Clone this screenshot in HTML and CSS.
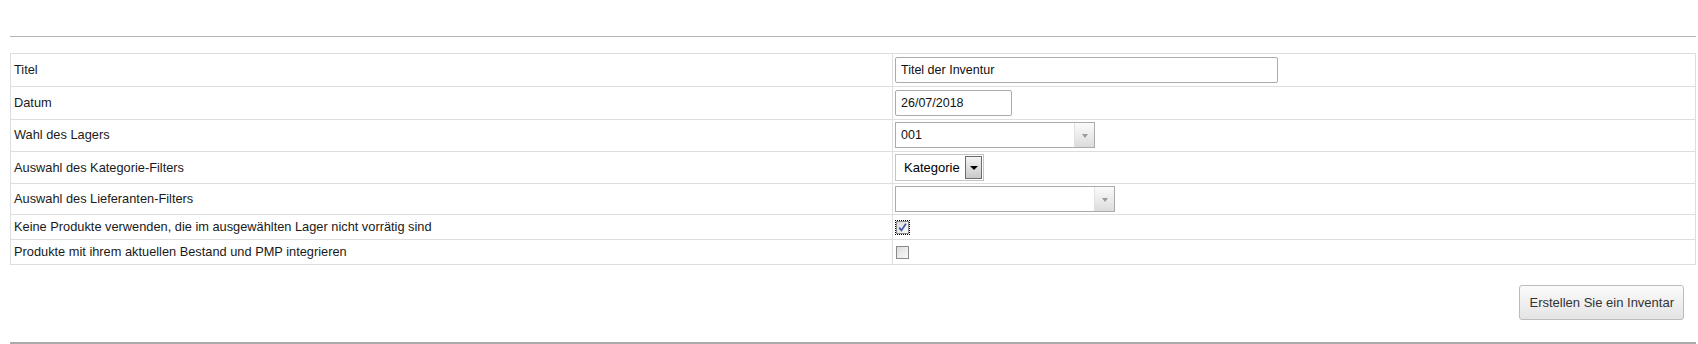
FILE: index.html
```html
<!DOCTYPE html>
<html lang="de">
<head>
<meta charset="utf-8">
<title>Inventur</title>
<link rel="stylesheet" href="styles.css">
</head>
<body>
<div class="page">
  <div class="rule rule-top"></div>
  <table class="form-table">
    <colgroup><col class="col-label"><col class="col-field"></colgroup>
    <tr class="row-tall">
      <td>Titel</td>
      <td><input class="text-input w-title" type="text" value="Titel der Inventur"></td>
    </tr>
    <tr class="row-tall">
      <td>Datum</td>
      <td><input class="text-input w-date" type="text" value="26/07/2018"></td>
    </tr>
    <tr class="row-mid">
      <td>Wahl des Lagers</td>
      <td><div class="combo w-lager"><span class="combo-text">001</span><span class="combo-arrow"><span class="tri-gray"></span></span></div></td>
    </tr>
    <tr class="row-mid2">
      <td>Auswahl des Kategorie-Filters</td>
      <td><div class="native-select"><span class="native-text">Kategorie</span><span class="native-btn"><span class="tri-black"></span></span></div></td>
    </tr>
    <tr class="row-mid3">
      <td>Auswahl des Lieferanten-Filters</td>
      <td><div class="combo w-lief"><span class="combo-text"></span><span class="combo-arrow"><span class="tri-gray"></span></span></div></td>
    </tr>
    <tr class="row-check">
      <td>Keine Produkte verwenden, die im ausgewählten Lager nicht vorrätig sind</td>
      <td><span class="focus-ring"><span class="checkbox checked"><svg width="11" height="11" viewBox="0 0 11 11"><path d="M2.2 5.6 L4.4 8.4 L8.9 1.8" fill="none" stroke="#3d56a6" stroke-width="1.7"/></svg></span></span></td>
    </tr>
    <tr class="row-check">
      <td>Produkte mit ihrem aktuellen Bestand und PMP integrieren</td>
      <td><span class="checkbox"></span></td>
    </tr>
  </table>
  <div class="actions">
    <button class="btn" type="button">Erstellen Sie ein Inventar</button>
  </div>
  <div class="rule rule-bottom"></div>
</div>
</body>
</html>
```
FILE: styles.css
```css
html, body {
  margin: 0;
  padding: 0;
  background: #fff;
}
body {
  font-family: "Liberation Sans", Arial, sans-serif;
  font-size: 12.8px;
  color: #1a1a1a;
}
.page {
  margin: 0 2px 0 10px;
  padding-top: 36px;
}
.rule {
  height: 0;
  border-top: 1px solid #b4b4b4;
}
.form-table {
  margin-top: 16px;
  width: 100%;
  border-collapse: collapse;
  table-layout: fixed;
}
.col-label { width: 882px; }
.form-table td {
  border: 1px solid #dedede;
  padding: 3px 3px;
  vertical-align: middle;
  line-height: 18px;
}
.form-table td:first-child { padding-left: 3px; }
.form-table td:last-child { padding-left: 2px; }

.row-mid td { padding-top: 2px; padding-bottom: 3px; }
.row-mid2 td { padding-top: 2px; padding-bottom: 2px; }
.row-mid3 td { padding-top: 2px; padding-bottom: 2px; }

.text-input {
  display: block;
  box-sizing: border-box;
  height: 26px;
  margin: 0;
  border: 1px solid #ababab;
  border-radius: 2px;
  padding: 0 5px;
  font-family: "Liberation Sans", Arial, sans-serif;
  font-size: 12.5px;
  color: #111;
  background: #fff;
}
.w-title { width: 383px; }
.w-date { width: 117px; }

.combo {
  display: flex;
  box-sizing: border-box;
  height: 26px;
  border: 1px solid #aaa;
  background: #fff;
}
.w-lager { width: 200px; }
.w-lief { width: 220px; }
.combo-text {
  flex: 1;
  padding-left: 5px;
  line-height: 24px;
  font-size: 12.5px;
  color: #111;
}
.combo-arrow {
  width: 19px;
  display: flex;
  align-items: center;
  justify-content: center;
  background: linear-gradient(to bottom, #fbfbfb, #dcdcdc);
  border-left: 1px solid #e2e2e2;
}
.tri-gray {
  width: 0;
  height: 0;
  border-left: 3px solid transparent;
  border-right: 3px solid transparent;
  border-top: 4px solid #9a9a9a;
  margin-top: 1px;
}

.native-select {
  display: flex;
  box-sizing: border-box;
  width: 89px;
  height: 27px;
  border: 1px solid #c4c4c4;
  background: #fff;
  padding: 1px;
}
.native-text {
  flex: 1;
  padding-left: 7px;
  font-size: 13px;
  line-height: 23px;
  color: #000;
}
.native-btn {
  box-sizing: border-box;
  width: 17px;
  display: flex;
  align-items: center;
  justify-content: center;
  border: 1px solid #6d6d6d;
  background: linear-gradient(to bottom, #f4f4f4, #c9c9c9);
}
.tri-black {
  width: 0;
  height: 0;
  border-left: 4px solid transparent;
  border-right: 4px solid transparent;
  border-top: 4px solid #000;
}

.focus-ring {
  display: inline-block;
  vertical-align: middle;
  outline: 1px dotted #000;
  padding: 0;
  margin-left: 1px;
}
.checkbox {
  display: inline-flex;
  align-items: center;
  justify-content: center;
  vertical-align: middle;
  box-sizing: border-box;
  width: 13px;
  height: 13px;
  border: 1px solid #8a8a8a;
  background: linear-gradient(135deg, #dcdcdc, #fafafa);
  margin-left: 1px;
}
.focus-ring .checkbox { margin-left: 0; display: flex; }

.actions {
  display: flex;
  justify-content: flex-end;
  padding: 20px 12px 22px 0;
}
.btn {
  box-sizing: border-box;
  height: 35px;
  padding: 0 9px;
  border: 1px solid #bcbcbc;
  border-radius: 3px;
  background: linear-gradient(to bottom, #fbfbfb, #e4e4e4);
  font-family: "Liberation Sans", Arial, sans-serif;
  font-size: 13px;
  color: #333;
}
.rule-bottom {
  border-top: 2px solid #aaa;
}
```
